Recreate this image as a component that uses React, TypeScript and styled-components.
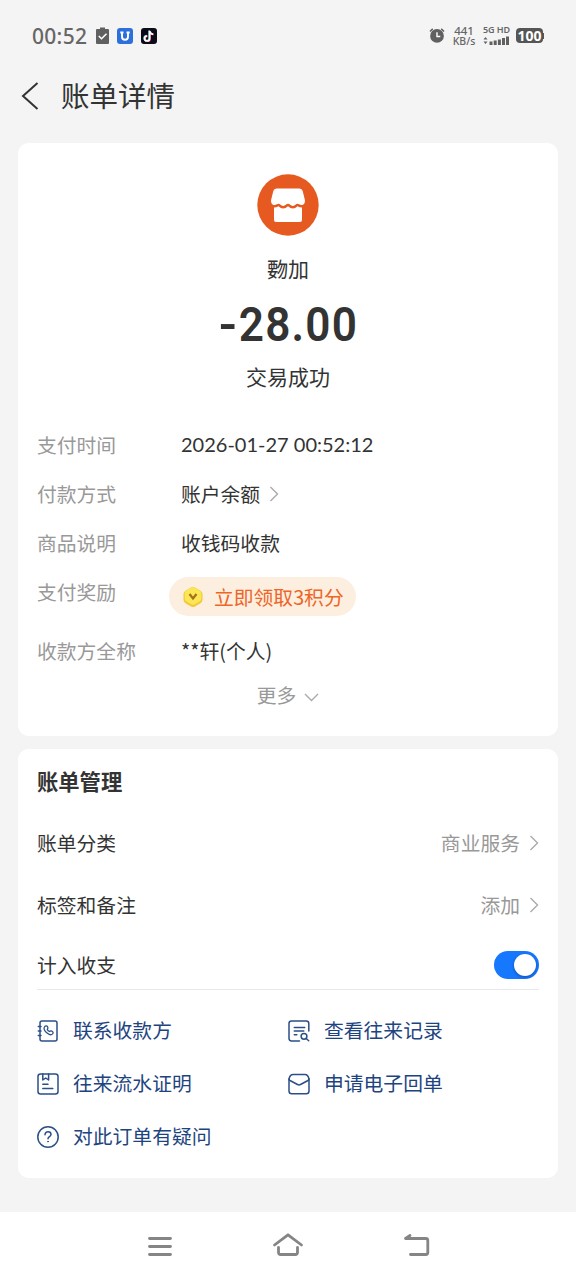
import React from 'react';
import styled, { createGlobalStyle } from 'styled-components';

const Global = createGlobalStyle`
  * { box-sizing: border-box; }
  body { margin: 0; background: #f4f4f4; }
`;

const Page = styled.div`
  width: 576px;
  height: 1280px;
  display: flex;
  flex-direction: column;
  background: #f4f4f4;
  color: #333;
  font-family: 'Noto Sans CJK SC', sans-serif;
  font-size: 19.8px;
  overflow: hidden;
  white-space: nowrap;
  svg { display: block; flex: none; }
`;

const StatusBar = styled.header`
  height: 72px;
  padding: 0 32px 1px;
  display: flex;
  align-items: center;
  justify-content: space-between;
  color: #666;
`;

const StatusGroup = styled.div<{ $gap: number }>`
  display: flex;
  align-items: center;
  gap: ${(p) => p.$gap}px;
`;

const Clock = styled.span`
  width: 56px;
  font: 500 21px/24px 'Noto Sans', sans-serif;
  letter-spacing: 0.3px;
`;

const Speed = styled.div`
  width: 24px;
  padding-top: 2px;
  display: flex;
  flex-direction: column;
  align-items: center;
  font-family: 'Noto Sans', sans-serif;
  font-weight: 500;
`;

const SpeedValue = styled.div`
  font-size: 11.5px;
  line-height: 10px;
`;

const SpeedUnit = styled.div`
  font-size: 10.5px;
  line-height: 11px;
`;

const Signal = styled.div`
  display: flex;
  flex-direction: column;
  gap: 2px;
  width: 26px;
`;

const Network = styled.span`
  font: 600 9px/8px 'Noto Sans', sans-serif;
  letter-spacing: -0.1px;
`;

const Battery = styled.div`
  width: 27px;
  height: 15px;
  border-radius: 4px;
  background: #555;
  color: #fff;
  text-align: center;
  font: 700 14px/15px 'Noto Sans', sans-serif;
`;

const TitleBar = styled.div`
  height: 71px;
  padding: 0 0 23px 21px;
  display: flex;
  align-items: center;
  gap: 22px;
`;

const Title = styled.h1`
  margin: 0;
  padding-bottom: 2px;
  font-size: 28.5px;
  font-weight: 400;
  line-height: 46px;
`;

const Card = styled.section<{ $height: number }>`
  height: ${(p) => p.$height}px;
  margin: 0 18px 13px;
  padding: 0 19px;
  border-radius: 11px;
  background: #fff;
`;

const Summary = styled.div`
  display: flex;
  flex-direction: column;
  align-items: center;
  padding-top: 31px;
  height: 277px;
`;

const Merchant = styled.div`
  margin-top: 17px;
  font-size: 21px;
  line-height: 30px;
`;

const Amount = styled.div`
  height: 60px;
  margin: 12px 0 0 2px;
  display: flex;
  font: 600 49px/60px Roboto, sans-serif;
  letter-spacing: 1.3px;
  transform: scaleX(0.9);
`;

const Minus = styled.span`
  margin-right: 2px;
  transform: scaleX(1.15);
`;

const Result = styled.div`
  margin-top: 6px;
  font-size: 21px;
  line-height: 30px;
`;

const Detail = styled.div<{ $height?: number }>`
  height: ${(p) => p.$height ?? 49}px;
  display: flex;
  line-height: 49px;
`;

const Label = styled.div`
  width: 144px;
  color: #999;
`;

const Value = styled.div`
  display: flex;
  align-items: center;
  gap: 9px;
  height: 49px;
`;

const DateValue = styled(Value)`
  font-family: Lato, sans-serif;
  font-size: 20px;
`;

const Reward = styled.div`
  width: 187px;
  height: 39px;
  margin: 10px 0 0 -12px;
  padding-left: 13px;
  display: flex;
  align-items: center;
  gap: 10px;
  border-radius: 20px;
  background: #fdefdf;
  color: #ee6528;
  line-height: 38px;
`;

const More = styled.div`
  display: flex;
  align-items: center;
  justify-content: center;
  gap: 8px;
  height: 38px;
  color: #999;
  svg { margin-top: 7px; }
`;

const SectionTitle = styled.h2`
  margin: 0;
  height: 63px;
  font-size: 21.3px;
  font-weight: 700;
  line-height: 63px;
`;

const Setting = styled.div<{ $height: number }>`
  height: ${(p) => p.$height}px;
  display: flex;
  align-items: center;
  justify-content: space-between;
`;

const SettingText = styled.span`
  padding-bottom: 2px;
`;

const SettingValue = styled.div`
  display: flex;
  align-items: center;
  gap: 9px;
  color: #999;
`;

const SwitchSetting = styled(Setting)`
  padding-top: 5px;
`;

const Toggle = styled.div`
  width: 45px;
  height: 28px;
  padding: 3px;
  display: flex;
  justify-content: flex-end;
  border-radius: 14px;
  background: #1677ff;
`;

const Knob = styled.div`
  width: 22px;
  height: 22px;
  border-radius: 50%;
  background: #fff;
  box-shadow: 0 1px 3px rgba(0, 0, 0, 0.35);
`;

const Links = styled.div`
  display: grid;
  grid-template-columns: 251px 1fr;
  grid-auto-rows: 53px;
  border-top: 1px solid #e8e8e8;
  padding-top: 14px;
`;

const LinkItem = styled.div`
  display: flex;
  align-items: center;
  gap: 14px;
  color: #1e4480;
`;

const LinkText = styled.span`
  padding-bottom: 2px;
`;

const NavBar = styled.nav`
  height: 68px;
  margin-top: auto;
  padding: 2px 145px 0;
  display: flex;
  align-items: center;
  justify-content: space-between;
  background: #fff;
`;

const Chevron = ({ down = false }: { down?: boolean }) => (
  <svg width={down ? 15 : 10} height={down ? 9 : 16} viewBox={down ? '0 0 15 9' : '0 0 10 16'} fill="none" stroke="#aaa" strokeWidth="1.4">
    <path d={down ? 'M1 1l6.500 6.500L14 1' : 'M1.500 1l7 7-7 7'} />
  </svg>
);

const LineIcon = ({ children }: { children: React.ReactNode }) => (
  <svg width="22" height="22" viewBox="0 0 22 22" fill="none" stroke="#2b4f86" strokeWidth="1.5" strokeLinecap="round" strokeLinejoin="round">
    {children}
  </svg>
);

const ContactIcon = () => (
  <LineIcon>
    <rect x="3" y="1" width="17" height="20" rx="2" />
    <path d="M1.300 6.500H4M1.300 11H4M1.300 15.500H4" />
    <path d="M7.700 6.600c1.200-1.100 2.500-.7 3 .5.400 1 .2 1.700-.4 2.300.4 1 1.100 1.700 2.200 2.100.8-.7 1.500-.8 2.500-.3 1.200.7 1.500 1.700.6 2.700-1.100 1.100-3 1.100-5.200-.6-3-2.400-4.300-5.100-2.700-6.700z" strokeWidth="1.300" />
  </LineIcon>
);

const RecordIcon = () => (
  <LineIcon>
    <path d="M20.800 11V3.500q0-2.500-2.500-2.500H3.500Q1 1 1 3.500v14.800Q1 21 3.500 21h8M6.300 7.500h10.400M6.300 11h9.500M6.300 14.800h2.500" />
    <circle cx="16" cy="16.300" r="2.900" />
    <path d="M18.200 18.500l2.500 2.300" />
  </LineIcon>
);

const StatementIcon = () => (
  <LineIcon>
    <rect x="1" y="1" width="20" height="20" rx="2.500" />
    <path d="M5.800 1v6l2.900-2 2.900 2V1M5.800 11.300h5.200M5.800 15.500h10" />
  </LineIcon>
);

const MailIcon = () => (
  <LineIcon>
    <path d="M1 6v12q0 2.800 2.800 2.800h14.400q2.800 0 2.800-2.800V6" />
    <path d="M1 6Q2 1.500 5 1.500h12Q20 1.500 21 6q-.2 1-1 1.500l-7.500 4q-1.500.8-3 0L2 7.500Q1.200 7 1 6z" />
  </LineIcon>
);

const QuestionIcon = () => (
  <LineIcon>
    <circle cx="11" cy="11" r="10.200" />
    <path d="M8 8.800c0-1.900 1.300-3 3-3s3 1.100 3 2.700c0 2-3 2.200-3 4.200" />
    <circle cx="11" cy="15.600" r=".5" fill="#2b4f86" strokeWidth=".8" />
  </LineIcon>
);

const LINKS = [
  { text: '联系收款方', Icon: ContactIcon },
  { text: '查看往来记录', Icon: RecordIcon },
  { text: '往来流水证明', Icon: StatementIcon },
  { text: '申请电子回单', Icon: MailIcon },
  { text: '对此订单有疑问', Icon: QuestionIcon },
];

export default function App() {
  return (
    <Page>
      <Global />
      <StatusBar>
        <StatusGroup $gap={8}>
          <Clock>00:52</Clock>
          <svg width="13" height="17" viewBox="0 0 13 17">
            <path d="M1 2h3V.5h5V2h3q1 0 1 1v13q0 1-1 1H1q-1 0-1-1V3q0-1 1-1z" fill="#606060" />
            <path d="M2.800 9l2.700 2.700 5-5" fill="none" stroke="#fff" strokeWidth="1.600" />
          </svg>
          <svg width="16" height="16" viewBox="0 0 16 16">
            <rect width="16" height="16" rx="3" fill="#2d70dc" />
            <path d="M3.300 4.500h3.200M9.500 4.500h3.200M5 4.500v4.200q0 3 3 3t3-3V4.500" fill="none" stroke="#fff" strokeWidth="1.900" />
          </svg>
          <svg width="16" height="16" viewBox="0 0 16 16">
            <rect width="16" height="16" rx="3" fill="#0d0b18" />
            <g fill="none" strokeWidth="1.700">
              <path d="M8.100 2.500v7.700a2.500 2.500 0 1 1-2.500-2.500M8.100 3q.6 2.700 3.600 3" stroke="#35dfe5" />
              <path d="M9.100 3v7.700a2.500 2.500 0 1 1-2.500-2.500M9.100 3.500q.6 2.700 3.600 3" stroke="#ef3e65" />
              <path d="M8.600 2.800v7.700A2.500 2.500 0 1 1 6.100 8M8.600 3.300q.6 2.700 3.600 3" stroke="#fff" />
            </g>
          </svg>
        </StatusGroup>
        <StatusGroup $gap={7}>
          <svg width="16" height="17" viewBox="0 0 17 17">
            <circle cx="8.500" cy="9" r="7.300" fill="#606060" />
            <path d="M1 4.300L4 1.500M16 4.300l-3-2.800" stroke="#606060" strokeWidth="1.600" />
            <path d="M8.500 5v4.500H12" fill="none" stroke="#fff" strokeWidth="1.500" />
          </svg>
          <Speed>
            <SpeedValue>441</SpeedValue>
            <SpeedUnit>KB/s</SpeedUnit>
          </Speed>
          <Signal>
            <Network>5G HD</Network>
            <svg width="26" height="9" viewBox="0 0 26 9" fill="#606060">
              <path d="M.5 3.500L2.500 1l2 2.500zM.5 5.500h4l-2 2.500z" />
              <path d="M6.500 5.500h3V9h-3zM10.700 4.500h3V9h-3zM14.900 3.500h3V9h-3zM19 2h3v7h-3zM23 .5h3V9h-3z" />
            </svg>
          </Signal>
          <StatusGroup $gap={0}>
            <Battery>100</Battery>
            <svg width="1" height="6"><rect width="1" height="6" fill="#555" /></svg>
          </StatusGroup>
        </StatusGroup>
      </StatusBar>

      <TitleBar>
        <svg width="18" height="28" viewBox="0 0 18 28" fill="none" stroke="#333" strokeWidth="2">
          <path d="M16.500 1L2 14l14.500 13" />
        </svg>
        <Title>账单详情</Title>
      </TitleBar>

      <Card $height={593}>
        <Summary>
          <svg width="62" height="62" viewBox="0 0 62 62">
            <circle cx="31" cy="31" r="30.700" fill="#e65a21" />
            <path d="M19.500 14.500h23q2.500 0 3.200 2.500l2.200 9c.4 3-1.200 5-3.400 5-2 0-2.700-1.200-4-1.200s-2.500 2.200-4.700 2.200-3.300-2.200-4.800-2.200-2.600 2.200-4.800 2.200-3.300-2.200-4.700-2.200-2 1.200-4 1.200c-2.200 0-3.800-2-3.400-5l2.200-9q.7-2.500 3.200-2.500z" fill="#fff" />
            <path d="M17 33.500q2.500 0 4.500-1.200 2.300 2.200 4.700 2.200t4.800-2.200q2.400 2.200 4.800 2.200t4.700-2.200q2 1.200 4.500 1.200V46q0 2-2 2H19q-2 0-2-2z" fill="#fff" />
          </svg>
          <Merchant>覅加</Merchant>
          <Amount><Minus>-</Minus>28.00</Amount>
          <Result>交易成功</Result>
        </Summary>
        <Detail>
          <Label>支付时间</Label>
          <DateValue>2026-01-27 00:52:12</DateValue>
        </Detail>
        <Detail>
          <Label>付款方式</Label>
          <Value>账户余额<Chevron /></Value>
        </Detail>
        <Detail>
          <Label>商品说明</Label>
          <Value>收钱码收款</Value>
        </Detail>
        <Detail $height={59}>
          <Label>支付奖励</Label>
          <Reward>
            <svg width="22" height="22" viewBox="0 0 22 22">
              <path d="M9 1.500q2-1 4 0l5.500 3.300q2 1.200 2 3.400v5.600q0 2.200-2 3.400L13 20.500q-2 1-4 0l-5.500-3.300q-2-1.200-2-3.400V8.200q0-2.200 2-3.400z" fill="#f2c93c" />
              <path d="M9.300 1.700q1.700-.9 3.400 0l4.800 2.800q1.800 1 1.800 3v5q0 2-1.800 3l-4.800 2.800q-1.700.9-3.400 0l-4.800-2.800q-1.800-1-1.800-3v-5q0-2 1.800-3z" fill="#fbe656" />
              <path d="M7.500 8l3.500 4.500L14.500 8" fill="none" stroke="#a5701c" strokeWidth="2.200" />
            </svg>
            立即领取3积分
          </Reward>
        </Detail>
        <Detail>
          <Label>收款方全称</Label>
          <Value>**轩(个人)</Value>
        </Detail>
        <More>更多<Chevron down /></More>
      </Card>

      <Card $height={429}>
        <SectionTitle>账单管理</SectionTitle>
        <Setting $height={62}>
          <SettingText>账单分类</SettingText>
          <SettingValue><SettingText>商业服务</SettingText><Chevron /></SettingValue>
        </Setting>
        <Setting $height={62}>
          <SettingText>标签和备注</SettingText>
          <SettingValue><SettingText>添加</SettingText><Chevron /></SettingValue>
        </Setting>
        <SwitchSetting $height={53}>
          <SettingText>计入收支</SettingText>
          <Toggle><Knob /></Toggle>
        </SwitchSetting>
        <Links>
          {LINKS.map(({ text, Icon }) => (
            <LinkItem key={text}><Icon /><LinkText>{text}</LinkText></LinkItem>
          ))}
        </Links>
      </Card>

      <NavBar>
        <svg width="30" height="30" viewBox="0 0 30 30" fill="none" stroke="#858585" strokeWidth="2.800" strokeLinecap="round">
          <path d="M4.500 6.500h21M4.500 14.500h21M4.500 22.500h21" />
        </svg>
        <svg width="32" height="30" viewBox="0 0 32 30" fill="none" stroke="#858585" strokeWidth="2.800" strokeLinecap="round" strokeLinejoin="round">
          <path d="M2.500 13L16 2.800 29.500 13M6.500 15.500v4.700q0 2.300 2.300 2.300h14.400q2.300 0 2.300-2.300v-4.700" />
        </svg>
        <svg width="30" height="30" viewBox="0 0 30 30" fill="none" stroke="#858585" strokeWidth="2.800" strokeLinecap="round" strokeLinejoin="round">
          <path d="M9 3.500L4.500 6.500h20.300q2 0 2 2v12q0 2-2 2H9.500" />
        </svg>
      </NavBar>
    </Page>
  );
}
